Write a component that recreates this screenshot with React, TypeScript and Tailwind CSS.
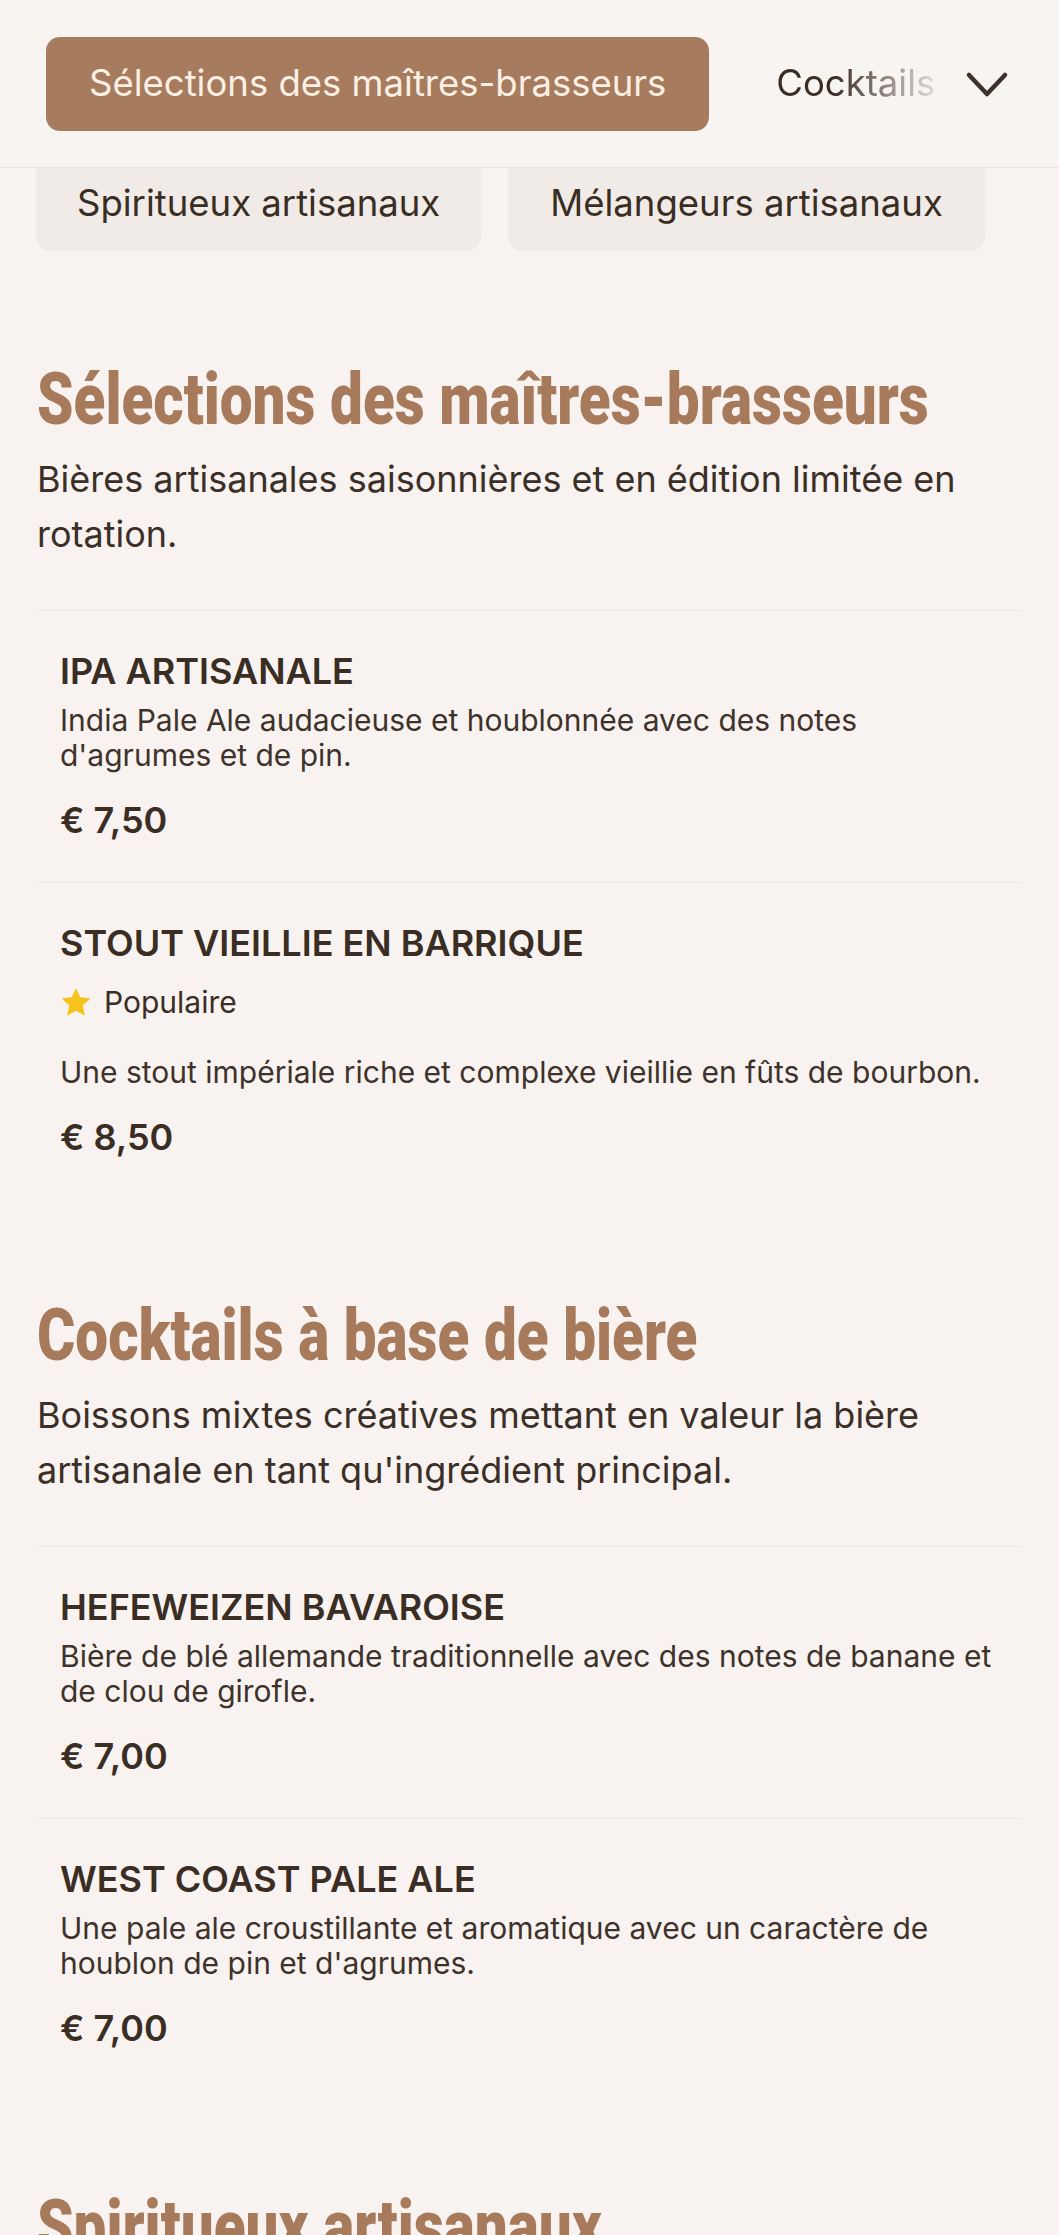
import React from 'react';

type Item = { name: string; desc: string; price: string; popular?: boolean };
type Section = { title: string; intro: string; items: Item[] };

const sections: Section[] = [
  {
    title: 'Sélections des maîtres-brasseurs',
    intro: 'Bières artisanales saisonnières et en édition limitée en rotation.',
    items: [
      {
        name: 'IPA ARTISANALE',
        desc: "India Pale Ale audacieuse et houblonnée avec des notes d'agrumes et de pin.",
        price: '€ 7,50',
      },
      {
        name: 'STOUT VIEILLIE EN BARRIQUE',
        desc: 'Une stout impériale riche et complexe vieillie en fûts de bourbon.',
        price: '€ 8,50',
        popular: true,
      },
    ],
  },
  {
    title: 'Cocktails à base de bière',
    intro: "Boissons mixtes créatives mettant en valeur la bière artisanale en tant qu'ingrédient principal.",
    items: [
      {
        name: 'HEFEWEIZEN BAVAROISE',
        desc: 'Bière de blé allemande traditionnelle avec des notes de banane et de clou de girofle.',
        price: '€ 7,00',
      },
      {
        name: 'WEST COAST PALE ALE',
        desc: "Une pale ale croustillante et aromatique avec un caractère de houblon de pin et d'agrumes.",
        price: '€ 7,00',
      },
    ],
  },
  {
    title: 'Spiritueux artisanaux',
    intro: 'Whiskies, gins et rhums de petites distilleries locales.',
    items: [],
  },
];

const Star = () => (
  <svg viewBox="0 0 24 24" className="w-[32px] h-[31px] fill-[#f5c31c]">
    <polygon points="12,0.8 15.3,8 23.2,8.9 17.3,14.2 18.9,22.3 12,18.3 5.1,22.3 6.7,14.2 0.8,8.9 8.7,8" />
  </svg>
);

const Chevron = () => (
  <svg viewBox="0 0 44 28" className="w-[44px] h-[28px]" fill="none">
    <polyline
      points="4,5 22,24 40,5"
      stroke="#3d322b"
      strokeWidth="4.5"
      strokeLinecap="round"
      strokeLinejoin="round"
    />
  </svg>
);

const MenuItem = ({ item }: { item: Item }) => (
  <div className="border-t border-[#ede7e2] px-[23px] pt-[38px] pb-[36px]">
    <h3 className="text-[36px] leading-[45px] font-semibold text-[#3a2d24]">{item.name}</h3>
    {item.popular && (
      <div className="mt-[16px] h-[40px] flex items-center gap-[12px]">
        <Star />
        <span className="text-[30px] text-[#3a2d24]">Populaire</span>
      </div>
    )}
    <p className={`${item.popular ? 'mt-[33px]' : 'mt-[9px]'} text-[30px] leading-[35px] text-[#3e322a]`}>
      {item.desc}
    </p>
    <div className="mt-[21px] text-[36px] leading-[52px] font-semibold text-[#3a2d24]">{item.price}</div>
  </div>
);

export default function App() {
  return (
    <div className="min-h-screen bg-[#f8f3f0] font-[Inter,sans-serif] overflow-hidden">
      <header className="h-[168px] border-b border-[#ece5df] bg-[#f8f4f1] flex items-center pl-[46px]">
        <button className="h-[94px] px-[43px] rounded-[14px] bg-[#a77b5e] text-[36.5px] text-[#fcefe4] whitespace-nowrap">
          Sélections des maîtres-brasseurs
        </button>
        <span className="ml-[24px] pl-[43px] text-[36.5px] text-[#3a2d24] whitespace-nowrap [mask-image:linear-gradient(to_right,black_50%,rgba(0,0,0,0.12)_100%)]">
          Cocktails
        </span>
        <div className="flex-1" />
        <div className="mr-[50px] flex items-center">
          <Chevron />
        </div>
      </header>

      <div className="flex gap-[27px] pl-[36px]">
        <div className="h-[83px] px-[41px] pb-[12px] rounded-b-[14px] bg-[#f0ebe6] flex items-center text-[36.5px] text-[#3a2d24] whitespace-nowrap">
          Spiritueux artisanaux
        </div>
        <div className="h-[83px] px-[42px] pb-[12px] rounded-b-[14px] bg-[#f0ebe6] flex items-center text-[36.5px] text-[#3a2d24] whitespace-nowrap">
          Mélangeurs artisanaux
        </div>
      </div>

      <main className="px-[37px] pt-[104px] flex flex-col gap-[92px]">
        {sections.map((s) => (
          <section key={s.title}>
            <h2 className="font-[Roboto,sans-serif] font-black text-[73px] leading-[88px] text-[#a87a5c] whitespace-nowrap origin-left scale-x-[0.8]">
              {s.title}
            </h2>
            <p className="mt-[9px] text-[36px] leading-[55px] text-[#3b2f27]">{s.intro}</p>
            <div className="mt-[48px]">
              {s.items.map((it) => (
                <MenuItem key={it.name} item={it} />
              ))}
            </div>
          </section>
        ))}
      </main>
    </div>
  );
}
